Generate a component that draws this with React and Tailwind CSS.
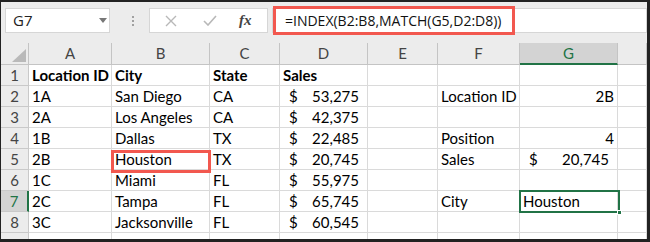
const rows = [
  [{ t: "Location ID", b: 1 }, { t: "City", b: 1 }, { t: "State", b: 1 }, { t: "Sales", b: 1 }, {}, {}, {}, {}],
  [{ t: "1A" }, { t: "San Diego" }, { t: "CA" }, { c: "53,275" }, {}, { t: "Location ID" }, { r: "2B" }, {}],
  [{ t: "2A" }, { t: "Los Angeles" }, { t: "CA" }, { c: "42,375" }, {}, {}, {}, {}],
  [{ t: "1B" }, { t: "Dallas" }, { t: "TX" }, { c: "22,485" }, {}, { t: "Position" }, { r: "4" }, {}],
  [{ t: "2B" }, { t: "Houston" }, { t: "TX" }, { c: "20,745" }, {}, { t: "Sales" }, { c: "20,745" }, {}],
  [{ t: "1C" }, { t: "Miami" }, { t: "FL" }, { c: "55,975" }, {}, {}, {}, {}],
  [{ t: "2C" }, { t: "Tampa" }, { t: "FL" }, { c: "65,745" }, {}, { t: "City" }, { t: "Houston" }, {}],
  [{ t: "3C" }, { t: "Jacksonville" }, { t: "FL" }, { c: "60,545" }, {}, {}, {}, {}],
  [{}, {}, {}, {}, {}, {}, {}, {}],
];

const cols = ["A", "B", "C", "D", "E", "F", "G", ""];

function Cell({ cell }) {
  const base = "h-[21px] border-r border-b border-[#dadada] flex items-center overflow-hidden whitespace-nowrap text-black";
  if (cell.c) {
    return (
      <div className={`${base} justify-between pl-[9px] pr-[8px]`}>
        <span>$</span>
        <span>{cell.c}</span>
      </div>
    );
  }
  if (cell.r) {
    return <div className={`${base} justify-end pr-[3px]`}>{cell.r}</div>;
  }
  return <div className={`${base} pl-[3px] ${cell.b ? "font-bold" : ""}`}>{cell.t}</div>;
}

function Toolbar() {
  return (
    <div className="h-[41px] bg-[#ececec] flex items-start pt-[6px] font-['Open_Sans',sans-serif]">
      <div className="ml-[4px] w-[105px] h-[25px] bg-white border border-[#d6d6d6] flex items-center justify-between pl-[7px] pr-[2px] text-[15px] text-[#222]">
        <span>G7</span>
        <svg width="8" height="5" viewBox="0 0 8 5">
          <path d="M0 0 L8 0 L4 5 Z" fill="#777" />
        </svg>
      </div>
      <div className="w-[39px] h-[25px] flex flex-col justify-center gap-[2px] pl-[22px]">
        <div className="w-[2px] h-[2px] bg-[#a0a0a0]" />
        <div className="w-[2px] h-[2px] bg-[#a0a0a0]" />
        <div className="w-[2px] h-[2px] bg-[#a0a0a0]" />
      </div>
      <div className="w-[119px] h-[25px] bg-white border border-[#d6d6d6] flex items-center pl-[15px]">
        <svg width="12" height="12" viewBox="0 0 12 12">
          <path d="M1 1 L11 11 M11 1 L1 11" stroke="#b8b8b8" strokeWidth="1.4" />
        </svg>
        <svg width="14" height="11" viewBox="0 0 14 11" className="ml-[26px]">
          <path d="M1 6 L5 10 L13 1" stroke="#b8b8b8" strokeWidth="1.6" fill="none" />
        </svg>
        <span className="ml-[22px] font-['Liberation_Serif',serif] italic text-[15px] text-[#444] font-bold">fx</span>
      </div>
      <div className="ml-[4px] flex-1 h-[25px] bg-white border border-[#d6d6d6] flex items-center pl-[12px] text-[14px] text-[#111]">
        =INDEX(B2:B8,MATCH(G5,D2:D8))
      </div>
    </div>
  );
}

export default function App() {
  return (
    <div className="relative w-[650px] h-[242px] overflow-hidden bg-white border-t-2 border-l border-r-[3px] border-b-[3px] border-[#222] font-['Lato',sans-serif] text-[15px]">
      <Toolbar />
      <div className="grid grid-cols-[28px_83px_98px_70px_88px_70px_82px_98px_1fr]">
        <div className="h-[22px] bg-[#ececec] border-r border-b border-[#c4c4c4] flex items-end justify-end pr-[2px] pb-[2px]">
          <svg width="14" height="13" viewBox="0 0 14 13">
            <path d="M14 0 L14 13 L0 13 Z" fill="#b9b9b9" />
          </svg>
        </div>
        {cols.map((c, k) =>
          c === "G" ? (
            <div key={k} className="h-[22px] bg-[#d3d3d3] border-r border-[#c4c4c4] border-b-2 border-b-[#217346] flex items-center justify-center text-[#217346]">
              {c}
            </div>
          ) : (
            <div key={k} className="h-[22px] bg-[#ececec] border-r border-b border-[#c4c4c4] flex items-center justify-center text-[#444]">
              {c}
            </div>
          )
        )}
        {rows.map((row, i) => (
          <div key={i} className="contents">
            {i === 6 ? (
              <div className="h-[21px] bg-[#d3d3d3] border-b border-[#c9c9c9] border-r-2 border-r-[#217346] flex items-center justify-center text-[#217346]">
                {i + 1}
              </div>
            ) : (
              <div className="h-[21px] bg-[#ececec] border-r border-b border-[#c9c9c9] flex items-center justify-center text-[#444]">
                {i < 8 ? i + 1 : ""}
              </div>
            )}
            {row.map((cell, j) => (
              <Cell key={j} cell={cell} />
            ))}
          </div>
        ))}
      </div>

      {/* formula highlight */}
      <div className="absolute left-[272px] top-[4px] w-[242px] h-[29px] border-[3px] border-[#f2584f]" />
      {/* Houston highlight */}
      <div className="absolute left-[110px] top-[148px] w-[100px] h-[23px] border-[3px] border-[#f2584f]" />
      {/* active cell G7 */}
      <div className="absolute left-[518px] top-[188px] w-[101px] h-[23px] border-2 border-[#217346]" />
      <div className="absolute left-[616px] top-[208px] w-[5px] h-[5px] bg-[#217346] border border-white" />
    </div>
  );
}
